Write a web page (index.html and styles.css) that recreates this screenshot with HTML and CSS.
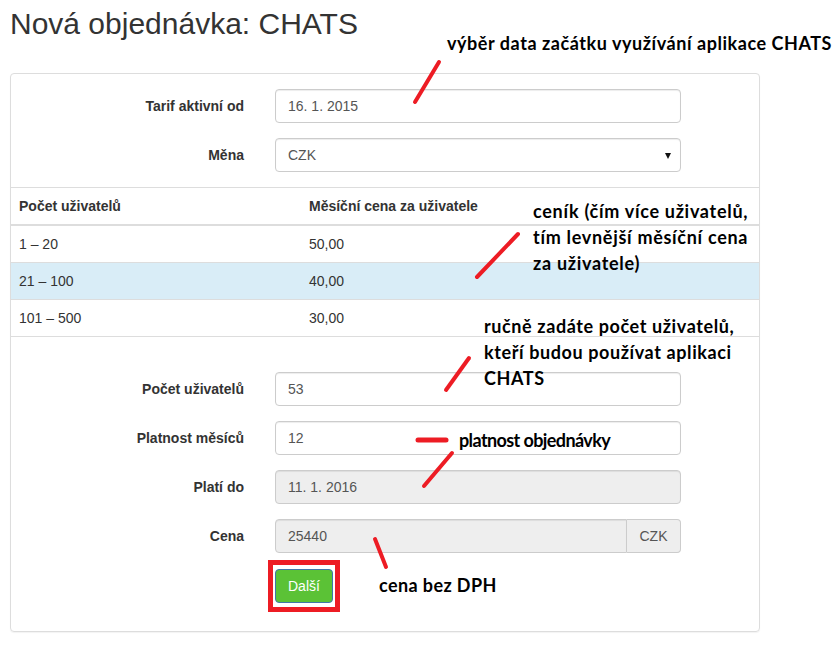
FILE: index.html
```html
<!DOCTYPE html>
<html lang="cs">
<head>
    <meta charset="utf-8">
    <meta name="viewport" content="width=device-width, initial-scale=1.0">
    <link rel="stylesheet" href="styles.css">
    <title>Nová objednávka: CHATS</title>
</head>
<body>
    <h1 class="page-title">Nová objednávka: CHATS</h1>

    <div class="panel">
        <div class="form-block form-top">
            <div class="form-row">
                <label for="since">Tarif aktivní od</label>
                <input type="text" id="since" class="control" value="16. 1. 2015">
            </div>
            <div class="form-row">
                <label for="currency">Měna</label>
                <div id="currency" class="control select">CZK<span class="caret"></span></div>
            </div>
        </div>

        <table class="price-table">
            <thead>
                <tr><th class="col-users">Počet uživatelů</th><th>Měsíční cena za uživatele</th></tr>
            </thead>
            <tbody>
                <tr><td>1 – 20</td><td>50,00</td></tr>
                <tr class="info"><td>21 – 100</td><td>40,00</td></tr>
                <tr><td>101 – 500</td><td>30,00</td></tr>
            </tbody>
        </table>

        <div class="form-block form-bottom">
            <div class="form-row">
                <label for="users">Počet uživatelů</label>
                <input type="text" id="users" class="control" value="53">
            </div>
            <div class="form-row">
                <label for="months">Platnost měsíců</label>
                <input type="text" id="months" class="control" value="12">
            </div>
            <div class="form-row">
                <label for="until">Platí do</label>
                <input type="text" id="until" class="control" value="11. 1. 2016" disabled>
            </div>
            <div class="form-row">
                <label for="price">Cena</label>
                <div class="input-group">
                    <input type="text" id="price" class="control" value="25440" disabled>
                    <span class="addon">CZK</span>
                </div>
            </div>
            <div class="form-row">
                <span></span>
                <div><button type="button" class="btn-next">Další</button></div>
            </div>
        </div>
    </div>

    <!-- annotations drawn over the screenshot -->
    <div class="notes">
        <svg class="marks" width="838" height="648" viewBox="0 0 838 648">
            <g stroke="#ed1c24" stroke-width="4" stroke-linecap="round" fill="none">
                <line x1="439" y1="62" x2="415" y2="102"/>
                <line x1="518" y1="234" x2="477" y2="277"/>
                <line x1="469" y1="358" x2="446" y2="390"/>
                <line x1="418" y1="440" x2="446" y2="440" stroke-width="5"/>
                <line x1="452" y1="453" x2="424" y2="486"/>
                <line x1="375" y1="539" x2="386" y2="567"/>
                <rect x="270.5" y="562.5" width="67" height="47" stroke-width="5" stroke-linecap="butt"/>
            </g>
        </svg>
        <div class="note note-date">výběr data začátku využívání aplikace CHATS</div>
        <div class="note note-pricelist">ceník (čím více uživatelů,<br>tím levnější měsíční cena<br>za uživatele)</div>
        <div class="note note-users">ručně zadáte počet uživatelů,<br>kteří budou používat aplikaci<br>CHATS</div>
        <div class="note note-valid">platnost objednávky</div>
        <div class="note note-price">cena bez DPH</div>
    </div>
</body>
</html>
```

FILE: styles.css
```css
* {box-sizing: border-box;}

body {
    margin: 0;
    position: relative;
    width: 838px;
    min-height: 648px;
    background-color: #fff;
    color: #333;
    font-family: "Liberation Sans", Arial, sans-serif;
    font-size: 14px;
    line-height: 20px;
}

/* Page heading */
.page-title {
    margin: 7px 0 33px 10px;
    font-size: 30px;
    line-height: 33px;
    font-weight: normal;
    color: #333;
}

/* Panel round the form */
.panel {
    margin-left: 10px;
    width: 750px;
    height: 559px;
    border: 1px solid #ddd;
    border-radius: 4px;
    box-shadow: 0 1px 1px rgba(0, 0, 0, 0.05);
}

.form-top {
    padding-top: 15px;
}

.form-bottom {
    padding-top: 35px;
}

/* One label + control line */
.form-row {
    display: grid;
    grid-template-columns: 233px 406px;
    column-gap: 31px;
    align-items: center;
    margin-bottom: 15px;
}

.form-row label {
    text-align: right;
    font-weight: bold;
}

.control {
    display: block;
    width: 100%;
    height: 34px;
    padding: 6px 12px;
    font-family: inherit;
    font-size: 14px;
    line-height: 20px;
    color: #555;
    background-color: #fff;
    border: 1px solid #ccc;
    border-radius: 4px;
    box-shadow: inset 0 1px 1px rgba(0, 0, 0, 0.075);
}

.control:disabled {
    background-color: #eee;
    color: #555;
    opacity: 1;
}

/* Currency picker */
.select {
    position: relative;
}

.caret {
    position: absolute;
    right: 9px;
    top: 14px;
    border-left: 3px solid transparent;
    border-right: 3px solid transparent;
    border-top: 6px solid #111;
}

.input-group {
    display: flex;
}

.input-group .control {
    border-radius: 4px 0 0 4px;
}

.addon {
    width: 54px;
    flex: none;
    padding: 6px 12px;
    color: #555;
    background-color: #eee;
    border: 1px solid #ccc;
    border-left: none;
    border-radius: 0 4px 4px 0;
    text-align: center;
}

/* Price list */
.price-table {
    width: 100%;
    border-collapse: collapse;
    border-top: 1px solid #ddd;
}

.price-table th,
.price-table td {
    padding: 8px;
    text-align: left;
    line-height: 20px;
}

.price-table th {
    border-bottom: 2px solid #ddd;
}

.price-table td {
    border-top: 1px solid #ddd;
}

.price-table tbody tr:last-child td {
    border-bottom: 1px solid #ddd;
}

.col-users {
    width: 290px;
}

.price-table .info td {
    background-color: #d9edf7;
}

.btn-next {
    height: 34px;
    padding: 6px 12px;
    margin-top: 1px;
    font-family: inherit;
    font-size: 14px;
    color: #fff;
    background-color: #5bc236;
    border: 1px solid #3f78a8;
    border-radius: 4px;
    cursor: pointer;
}

/* Overlay with the hand made notes */
.notes {
    position: absolute;
    top: 0;
    left: 0;
    width: 838px;
    height: 648px;
    pointer-events: none;
}

.marks {
    position: absolute;
    top: 0;
    left: 0;
}

.note {
    position: absolute;
    font-family: Lato, "Open Sans", sans-serif;
    font-weight: bold;
    font-size: 18px;
    line-height: 26px;
    letter-spacing: 0.55px;
    color: #000;
    white-space: nowrap;
}

.note-date { left: 447px; top: 30px; }
.note-pricelist { left: 533px; top: 198px; letter-spacing: 0.7px; }
.note-users { left: 484px; top: 313px; letter-spacing: 0.6px; }
.note-valid { left: 459px; top: 427px; letter-spacing: -0.6px; }
.note-price { left: 379px; top: 572px; letter-spacing: 0.4px; }
```
